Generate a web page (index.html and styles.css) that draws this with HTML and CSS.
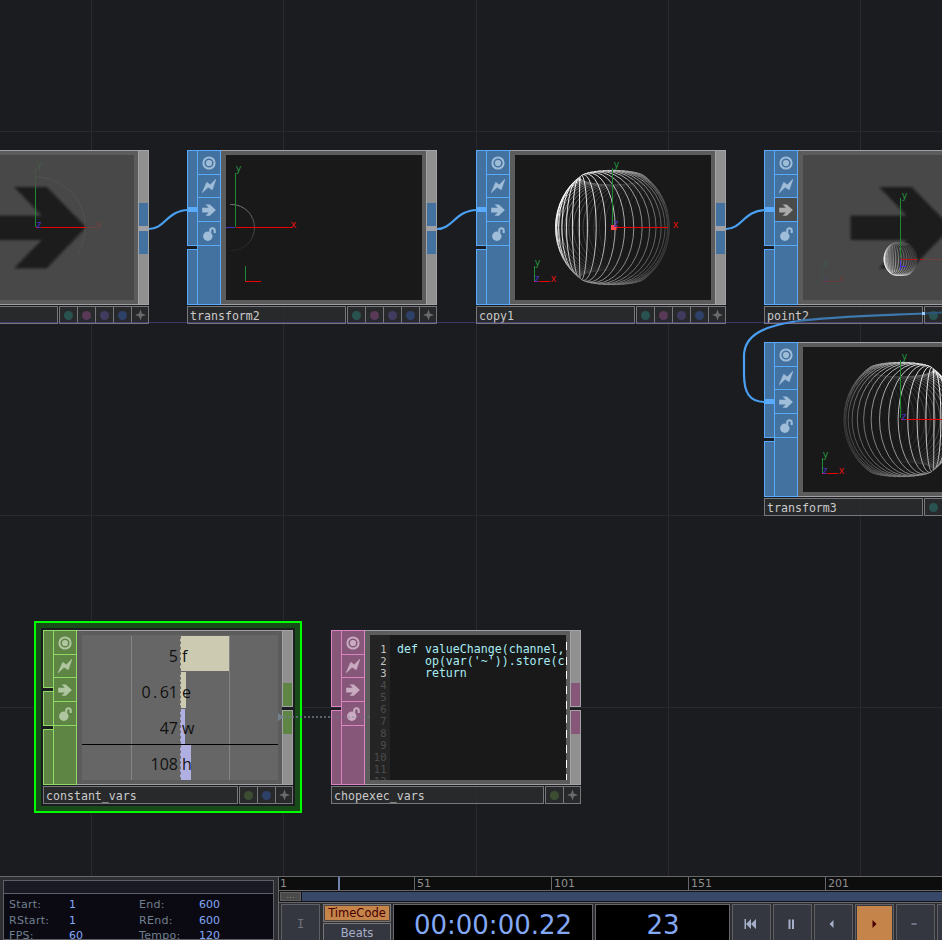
FILE: index.html
```html
<!DOCTYPE html>
<html lang="en">
<head>
<meta charset="utf-8">
<title>Network editor</title>
<link rel="stylesheet" href="styles.css">
</head>
<body>
<svg width="0" height="0" class="defs">
  <defs>
    <symbol id="i-ring" viewBox="0 0 14 14"><circle cx="7" cy="7" r="5.6" fill="none" stroke="currentColor" stroke-width="2"/><circle cx="7" cy="7" r="3.1" fill="currentColor"/></symbol>
    <symbol id="i-bolt" viewBox="0 0 14 14"><path d="M0 14 4.700 3.300 8.400 5.800 14 0 10.300 10.800 6.100 8.300Z" fill="currentColor" stroke="currentColor" stroke-width=".5"/></symbol>
    <symbol id="i-arrow" viewBox="0 0 14 14"><path d="M.2 4.800H6.800L3.500 1.400H7.800L13.900 7.100 7.800 12.800H3.500L6.800 9.400H.2Z" fill="currentColor"/></symbol>
    <symbol id="i-bomb" viewBox="0 0 14 14"><circle cx="5.800" cy="9.300" r="4.700" fill="currentColor"/><path d="M8.200 5.800V3.600C8.200 .6 12.700 .4 12.700 3.600V6" fill="none" stroke="currentColor" stroke-width="2.100"/></symbol>
    <symbol id="i-star" viewBox="0 0 12 12"><path d="M6 0 7.600 4.400 12 6 7.600 7.600 6 12 4.400 7.600 0 6 4.400 4.400Z" fill="#6a6a6a"/></symbol>
    <symbol id="corner" viewBox="0 0 196 145"><path class="axis" d="M19.5 111V126" stroke="#1e8a38"/><path class="axis" d="M19 126.5H35" stroke="#f00000"/></symbol>
    <linearGradient id="fade" x1="0" y1="0" x2="0" y2="1"><stop offset="0" stop-color="#777"/><stop offset="1" stop-color="#242424"/></linearGradient>
    <filter id="soft"><feGaussianBlur stdDeviation=".8"/></filter>
    <path id="bigarrow" d="M76.3 32H108.7L148 72.3 108.7 113.3H76.3L103.7 85H47.7V60.7H103.7Z" fill="#1c1c1c" filter="url(#soft)"/>
  </defs>
</svg>

<main class="network">
  <section class="node sop" style="left:-101px;top:150px">
    <div class="face">
      <div class="inputs"><i class="first"></i><i></i></div>
      <div class="tools"><span></span><span></span><span></span><span></span><span></span></div>
      <div class="body"><svg class="view light" viewBox="0 0 196 145">
        <use href="#bigarrow"/>
        <path d="M97.5 22A50 50 0 0 1 140 98" fill="none" stroke="#525252"/>
        <path class="axis" d="M97.5 13V60" stroke="#465546"/><path class="axis" d="M97.5 32V72" stroke="#1e8a38"/>
        <path class="axis" d="M98 72.5H148" stroke="#f00000"/><path class="axis" d="M148 72.5H159" stroke="#6a4242"/>
        <text x="98.500" y="13" fill="#465c48">y</text><text x="157.500" y="73" fill="#6e4242">x</text><text class="z" x="98" y="73">z</text>
      </svg></div>
      <div class="outputs"><i><b></b><em></em><b></b></i></div>
    </div>
    <div class="foot"><div class="name"></div><div class="flags"><i class="teal"></i><i class="plum"></i><i class="violet"></i><i class="blue"></i><i class="star"><svg><use href="#i-star"/></svg></i></div></div>
  </section>

  <section class="node sop" style="left:187px;top:150px">
    <div class="face">
      <div class="inputs"><i class="first"><u></u></i><i></i></div>
      <div class="tools"><span><svg><use href="#i-ring"/></svg></span><span><svg><use href="#i-bolt"/></svg></span><span><svg><use href="#i-arrow"/></svg></span><span><svg><use href="#i-bomb"/></svg></span><span></span></div>
      <div class="body"><svg class="view" viewBox="0 0 196 145">
        <path d="M4 49.500H5.500A23 23 0 0 1 5.500 95.500H4" fill="none" stroke="url(#fade)"/>
        <path class="axis" d="M9.500 18V72" stroke="#1e8a38"/><path class="axis" d="M0 72.500H9" stroke="#4433bb"/><path class="axis" d="M10 72.500H66" stroke="#f00000"/>
        <text class="y" x="9.500" y="17">y</text><text class="x" x="64.500" y="73">x</text>
        <use href="#corner"/>
      </svg></div>
      <div class="outputs"><i><b></b><em></em><b></b></i></div>
    </div>
    <div class="foot"><div class="name">transform2</div><div class="flags"><i class="teal"></i><i class="plum"></i><i class="violet"></i><i class="blue"></i><i class="star"><svg><use href="#i-star"/></svg></i></div></div>
  </section>

  <section class="node sop" style="left:476px;top:150px">
    <div class="face">
      <div class="inputs"><i class="first"><u></u></i><i></i></div>
      <div class="tools"><span><svg><use href="#i-ring"/></svg></span><span><svg><use href="#i-bolt"/></svg></span><span><svg><use href="#i-arrow"/></svg></span><span><svg><use href="#i-bomb"/></svg></span><span></span></div>
      <div class="body"><svg class="view" viewBox="0 0 196 145">
        <g data-sphere="left" data-cx="97.5" data-cy="72.500" data-scale="1"></g>
        <path class="axis" d="M97.500 13V71" stroke="#1e8a38"/><path class="axis" d="M98 72.500H153" stroke="#f00000"/>
        <rect x="96" y="70" width="5.500" height="5" fill="#ff4848"/>
        <text class="y" x="98.500" y="13">y</text><text class="x" x="157.500" y="73">x</text><text class="z" x="98" y="72">z</text>
        <use href="#corner"/><text class="y" x="19.500" y="111">y</text><text class="x" x="35.500" y="127">x</text><text class="z" x="19" y="127">z</text>
      </svg></div>
      <div class="outputs"><i><b></b><em></em><b></b></i></div>
    </div>
    <div class="foot"><div class="name">copy1</div><div class="flags"><i class="teal"></i><i class="plum"></i><i class="violet"></i><i class="blue"></i><i class="star"><svg><use href="#i-star"/></svg></i></div></div>
  </section>

  <section class="node sop" style="left:764px;top:150px">
    <div class="face">
      <div class="inputs"><i class="first"><u></u></i><i></i></div>
      <div class="tools"><span><svg><use href="#i-ring"/></svg></span><span><svg><use href="#i-bolt"/></svg></span><span class="off"><svg><use href="#i-arrow"/></svg></span><span><svg><use href="#i-bomb"/></svg></span><span></span></div>
      <div class="body"><svg class="view light" viewBox="0 0 196 145">
        <use href="#bigarrow"/>
        <circle cx="97.500" cy="104" r="16.500" fill="#3c3c3c"/>
        <g data-sphere="small" data-cx="97.500" data-cy="104" data-scale=".29"></g>
        <path class="axis" d="M97.500 43V102" stroke="#1e8a38"/><path class="axis" d="M97.500 105V115" stroke="#4a38e0"/><path class="axis" d="M98 111.500H103" stroke="#4a38e0"/>
        <path class="axis" d="M98 104.500H115M117 104.500H121" stroke="#b01818"/><path class="axis" d="M121 104.500H196" stroke="#6a4242"/>
        <text class="y" x="98.500" y="44">y</text>
        <use href="#corner" opacity=".18"/><g opacity=".22"><text class="y" x="19.500" y="111">y</text><text class="x" x="35.500" y="127">x</text><text class="z" x="19" y="127">z</text></g>
      </svg></div>
      <div class="outputs"><i><b></b><em></em><b></b></i></div>
    </div>
    <div class="foot"><div class="name">point2</div><div class="flags"><i class="teal"></i><i class="plum"></i><i class="violet"></i><i class="blue"></i><i class="star"></i></div></div>
  </section>

  <section class="node sop" style="left:764px;top:342px">
    <div class="face">
      <div class="inputs"><i class="first"><u></u></i><i></i></div>
      <div class="tools"><span><svg><use href="#i-ring"/></svg></span><span><svg><use href="#i-bolt"/></svg></span><span><svg><use href="#i-arrow"/></svg></span><span><svg><use href="#i-bomb"/></svg></span><span></span></div>
      <div class="body"><svg class="view" viewBox="0 0 196 145">
        <g data-sphere="right" data-cx="97.8" data-cy="72.500" data-scale="1"></g>
        <path class="axis" d="M97.500 13V71" stroke="#1e8a38"/><path class="axis" d="M98 72.500H153" stroke="#f00000"/>
        <text class="y" x="98.500" y="13">y</text><text class="z" x="98" y="73">z</text>
        <use href="#corner"/><text class="y" x="19.500" y="111">y</text><text class="x" x="35.500" y="127">x</text><text class="z" x="19" y="127">z</text>
      </svg></div>
      <div class="outputs"><i><b></b><em></em><b></b></i></div>
    </div>
    <div class="foot"><div class="name">transform3</div><div class="flags"><i class="teal"></i><i class="plum"></i><i class="violet"></i><i class="blue"></i><i class="star"></i></div></div>
  </section>

  <div class="selection"></div>
  <section class="node chop" style="left:43px;top:630px">
    <div class="face">
      <div class="inputs"><i class="first"></i><i class="second"></i><i></i></div>
      <div class="tools"><span><svg><use href="#i-ring"/></svg></span><span><svg><use href="#i-bolt"/></svg></span><span><svg><use href="#i-arrow"/></svg></span><span><svg><use href="#i-bomb"/></svg></span><span></span></div>
      <div class="body"><div class="channels">
        <div class="chan"><span>5</span><b class="cream" style="width:49px">f</b></div>
        <div class="chan"><span>0<i>.</i>61</span><b class="cream" style="width:6px">e</b></div>
        <div class="chan ruled"><span>47</span><b class="lilac" style="width:5px">w</b></div>
        <div class="chan"><span>108</span><b class="lilac" style="width:11px">h</b></div>
      </div></div>
      <div class="outputs split"><i><b></b></i><i><b></b></i></div>
    </div>
    <div class="foot"><div class="name">constant_vars</div><div class="flags"><i class="olive"></i><i class="blue"></i><i class="star"><svg><use href="#i-star"/></svg></i></div></div>
  </section>

  <section class="node dat" style="left:331px;top:630px">
    <div class="face">
      <div class="inputs"><i class="first"></i><i></i></div>
      <div class="tools"><span><svg><use href="#i-ring"/></svg></span><span><svg><use href="#i-bolt"/></svg></span><span><svg><use href="#i-arrow"/></svg></span><span><svg><use href="#i-bomb"/></svg></span><span></span></div>
      <div class="body"><div class="code">
        <pre class="gutter"><b>1
2
3</b>
4
5
6
7
8
9
10
11
12</pre>
        <pre class="source">def valueChange(channel,
    op(var('~')).store(ch
    return</pre>
      </div></div>
      <div class="outputs split"><i><b></b></i><i><b></b></i></div>
    </div>
    <div class="foot"><div class="name">chopexec_vars</div><div class="flags"><i class="olive"></i><i class="star"><svg><use href="#i-star"/></svg></i></div></div>
  </section>

  <svg class="wires" viewBox="0 0 942 876">
    <g fill="none" stroke="#4a9ff0" stroke-width="2.200">
      <path d="M149 229C165 229 167 210.500 188 210"/>
      <path d="M437 229C453 229 455 210.500 477 210"/>
      <path d="M726 229C742 229 744 210.500 765 210"/>
      <path d="M795 321.500C766 326 744 334 744 356V374C744 392 749 402 765 402"/>
      <path d="M795 321.500C830 316.500 880 315.500 924 313.500" stroke="#3d78ae"/>
      <path d="M924 313.500L942 312.500" stroke="#2e5679"/>
    </g>
    <rect x="922" y="312" width="3" height="3" fill="#9bcbff"/>
    <path d="M284 717H331" stroke="#6c7c8a" stroke-width="1.600" stroke-dasharray="2 2"/>
    <path d="M332 717H371" stroke="#6c7c8a" stroke-opacity=".45" stroke-width="1.600" stroke-dasharray="2 2"/>
    <path d="M278 713L284 717 278 721Z" fill="#71808b"/>
  </svg>
</main>

<footer class="bar">
  <div class="info">
    <div class="info-head"></div>
    <dl>
      <dt>Start:</dt><dd>1</dd><dt>End:</dt><dd>600</dd>
      <dt>RStart:</dt><dd>1</dd><dt>REnd:</dt><dd>600</dd>
      <dt>FPS:</dt><dd>60</dd><dt>Tempo:</dt><dd>120</dd>
    </dl>
  </div>
  <div class="timeline">
    <div class="ruler"><span class="t0">1</span><span>51</span><span>101</span><span>151</span><span>201</span><i class="playhead"></i></div>
    <div class="range"><span>...</span><i></i></div>
    <div class="controls">
      <div class="btn lock">I</div>
      <div class="modes"><div class="on">TimeCode</div><div>Beats</div></div>
      <div class="lcd">00:00:00.22</div>
      <div class="lcd frame">23</div>
      <div class="btn"><svg viewBox="0 0 12 10"><path d="M.5 0H2V10H.5ZM7 0V10L2 5ZM12 0V10L7 5Z"/></svg></div>
      <div class="btn"><svg viewBox="0 0 12 10"><path d="M3.500 .5H5.500V10H3.500ZM7 .5H9V10H7Z"/></svg></div>
      <div class="btn"><svg viewBox="0 0 12 10"><path d="M7.500 1V9L3.500 5Z"/></svg></div>
      <div class="btn play"><svg viewBox="0 0 12 10"><path d="M4.500 1V9L8.500 5Z"/></svg></div>
      <div class="btn"><svg viewBox="0 0 12 10"><path d="M3.500 4.500H8.500V5.500H3.500Z"/></svg></div>
      <div class="btn"></div>
    </div>
  </div>
</footer>
<script src="script.js"></script>
</body>
</html>
```
FILE: styles.css
```css
* { box-sizing: border-box; }
html, body { margin: 0; height: 100%; overflow: hidden; }
body { width: 942px; height: 940px; display: flex; flex-direction: column; background: #1b1c20; font-family: "DejaVu Sans", sans-serif; }
.defs { position: absolute; }
i, em, u { font-style: normal; text-decoration: none; }

.network { position: relative; flex: 1; overflow: hidden; background: #1b1c20; }
.network::before, .network::after { content: ""; position: absolute; inset: 0; pointer-events: none; }
.network::before {
  background:
    linear-gradient(#29292f, #29292f) 91px 0 / 1px 100% no-repeat, linear-gradient(#29292f, #29292f) 283px 0 / 1px 100% no-repeat,
    linear-gradient(#29292f, #29292f) 476px 0 / 1px 100% no-repeat, linear-gradient(#29292f, #29292f) 668px 0 / 1px 100% no-repeat,
    linear-gradient(#29292f, #29292f) 860px 0 / 1px 100% no-repeat, linear-gradient(#29292f, #29292f) 0 131px / 100% 1px no-repeat,
    linear-gradient(#29292f, #29292f) 0 515px / 100% 1px no-repeat, linear-gradient(#29292f, #29292f) 0 707px / 100% 1px no-repeat;
}
.network::after { background: linear-gradient(rgba(94, 84, 180, .5), rgba(94, 84, 180, .5)) 0 322px / 100% 1px no-repeat; }
.wires { position: absolute; left: 0; top: 0; width: 942px; height: 876px; }
.selection { position: absolute; left: 34px; top: 621px; width: 268px; height: 192px; border: 2px solid #00ff00; background: #1b1c1f; box-shadow: inset 0 0 0 5px #174b17; }

.node { position: absolute; width: 250px; }
.sop { --fill: #4472a0; --line: #59abff; --icon: #9fbcd8; --h1: 96px; }
.chop { --fill: #5f8545; --line: #8fd964; --icon: #b0c6a0; --h1: 58px; }
.dat { --fill: #87577a; --line: #dc83c4; --icon: #c9acc1; --h1: 77px; }
.face { display: grid; grid-template-columns: 10px 24px 205px 11px; height: 155px; }
.inputs { display: flex; flex-direction: column; gap: 3px; }
.inputs i { flex: 1; background: var(--fill); border: 1px solid var(--line); border-right: 0; }
.inputs .first { flex: none; height: var(--h1); padding-top: 56px; }
.inputs .second { flex: none; height: 35px; }
.inputs u { display: block; height: 5px; background: var(--line); }
.tools { display: grid; grid-template-rows: 24px 23px 24px 24px 1fr; background: var(--fill); border: 1px solid var(--line); color: var(--icon); }
.tools span { display: flex; align-items: center; justify-content: center; border-bottom: 1px solid var(--line); }
.tools span:last-child { border-bottom: 0; }
.tools svg { width: 14px; height: 14px; }
.tools .off { background: #4b4b4b; color: #aaa; }
.body { background: #5c5c5c; border: 1px solid #a0a0a2; border-width: 1px 0; padding: 4px 4px 4px 5px; }
.view { display: block; width: 196px; height: 145px; background: #191919; }
.view.light { background: #484848; }
.view text { font: 10px "DejaVu Sans Mono", monospace; }
.view .x { fill: #e81010; } .view .y { fill: #229040; } .view .z { fill: #4633c0; }
.axis { shape-rendering: crispEdges; stroke-width: 1; }
.outputs { display: flex; flex-direction: column; gap: 3px; }
.outputs i { flex: 1; background: #909090; border: 1px solid #a3a3a6; padding-top: 52px; }
.outputs b { display: block; height: 23px; background: var(--fill); }
.outputs em { display: block; height: 5px; background: #a0a0a5; }
.outputs.split i { padding-top: 0; }
.outputs.split i:first-child { flex: none; height: 77px; padding-top: 52px; }
.foot { display: flex; gap: 1px; height: 18px; margin-top: 1px; }
.name { flex: 1; border: 1px solid #77777b; background: rgba(42, 43, 45, .85); color: #cacaca; font: 11.6px/18px "DejaVu Sans Mono", monospace; padding-left: 2px; }
.flags { display: flex; border-right: 1px solid #77777b; }
.flags i { width: 18px; border: 1px solid #77777b; border-right: 0; background: rgba(42, 43, 45, .85); display: flex; align-items: center; justify-content: center; }
.flags i:last-child { width: 17px; }
.flags i::before { content: ""; width: 9px; height: 9px; border-radius: 50%; background: var(--dot); }
.flags .star::before { display: none; }
.flags svg { width: 11px; height: 12px; }
.teal { --dot: #295350; } .plum { --dot: #593958; } .violet { --dot: #423b60; } .blue { --dot: #2e4168; } .olive { --dot: #3d4d32; }

.channels { height: 145px; padding-top: 1px; display: grid; grid-template-rows: 36px 37px 36px 35px; background:
  linear-gradient(#858585, #858585) 49px 1px / 1px 144px no-repeat,
  linear-gradient(#858585, #858585) 147px 1px / 1px 144px no-repeat, #666; font: 16px/36px "Open Sans", sans-serif; color: #111; }
.chan { display: grid; grid-template-columns: 98px 1fr; grid-template-rows: 100%; }
.chan span { text-align: right; padding-right: 2px; line-height: 40px; height: 35px; }
.chan span i { display: inline-block; width: 9px; text-align: center; }
.chan b { font-weight: 400; line-height: 40px; margin-bottom: 1px; padding-left: 1px; border-left: 1px dashed #707070; }
.chan:last-child b { margin-bottom: 0; }
.chan.ruled { box-shadow: inset 0 -1px #000; }
.chan.ruled span, .chan:last-child span, .chan.ruled b, .chan:last-child b { line-height: 39px; }
.cream { background: #cccbb2; } .lilac { background: #b0afe2; }

.code { height: 145px; margin-right: -1px; overflow: hidden; display: flex; background:
  repeating-linear-gradient(#fff 0 8px, #5c5c5c 8px 14.700px) 196px 7px / 1px 138px no-repeat,
  linear-gradient(#5c5c5c, #5c5c5c) 196px 0 / 1px 7px no-repeat, #191919; }
.code pre { margin: 0; padding-top: 8px; font: 11.600px/12px "DejaVu Sans Mono", monospace; }
.gutter { flex: none; width: 20px; margin-left: 1px; padding-right: 3.500px; background: #242424; color: #4c4c4c; text-align: right; font-size: 10.500px !important; }
.gutter b { font-weight: 400; color: #c4c4c4; }
.source { width: 174px; color: #a9edf5; overflow: hidden; }
.code .source { margin-left: 1px; padding-left: 6px; }

.bar { flex: none; height: 64px; display: flex; background: #2d2e32; border-top: 1px solid #66666b; }
.info { flex: none; width: 271px; margin: 3px 4px 0 3px; border: 1px solid #5e5e66; background: #0b0a13; }
.info-head { height: 13px; background: #1a1a24; border-bottom: 1px solid #5e5e66; }
.info dl { margin: 0; padding: 3px 0 0 5px; display: grid; grid-template-columns: 60px 70px 60px 60px; grid-auto-rows: 15.500px; font-size: 11px; line-height: 16px; }
.info dt { color: #70808e; letter-spacing: .3px; }
.info dd { margin: 0; color: #83a8f6; }
.timeline { flex: 1; min-width: 0; overflow: hidden; border-left: 1px solid #66666b; }
.ruler { position: relative; display: grid; grid-template-columns: 135px 137px 137px 137px 137px; height: 14px; background: #0d0d0d; border-bottom: 1px solid #66666b; }
.ruler span { border-left: 1px solid #66666b; padding-left: 2px; font-size: 11px; line-height: 13px; color: #8f8f8f; }
.ruler .t0 { border: 0; padding-left: 1px; }
.playhead { position: absolute; left: 59px; top: 0; width: 2px; height: 13px; background: #6f82ae; }
.range { height: 12px; display: flex; gap: 1px; padding: 1px 0 1px 1px; background: #141416; border-bottom: 1px solid #66666b; }
.range span { width: 21px; height: 9px; background: #4a4a4a; border: 1px solid #606060; color: #888; font-size: 9px; line-height: 4px; text-align: center; }
.range i { flex: 1; background: #374869; }
.controls { display: flex; gap: 2px; margin: 1px 0 0 2px; height: 60px; width: 760px; }
.btn { flex: none; width: 39px; height: 40px; background: #353740; border: 1px solid #606064; display: flex; align-items: center; justify-content: center; padding-right: 3px; color: #6e727c; }
.btn svg { width: 12px; height: 10px; fill: #a5b0c8; }
.lock { padding-right: 0; font: 12px "DejaVu Sans Mono", monospace; }
.play { background: #c4844a; box-shadow: inset 0 0 0 1px #353740; padding-right: 1px; }
.play svg { fill: #480000; }
.modes { width: 68px; margin-left: 1px; display: grid; grid-template-rows: 18px 21px; gap: 1px; font-size: 11.500px; line-height: 17px; text-align: center; color: #a5b0c8; }
.modes div { background: #353740; border: 1px solid #77777b; }
.modes div:last-child { line-height: 19px; }
.modes .on { background: #c4844a; color: #480000; box-shadow: inset 0 0 0 1px #51433a; }
.lcd { width: 200px; height: 40px; background: #000; border: 1px solid #66666b; color: #83a8f6; font-size: 26px; line-height: 40px; text-align: center; }
.lcd.frame { width: 135px; padding-left: 1px; }
```
FILE: script.js
```js
// Wire surfaces: an arc offset from the vertical axis, copied around it.
const NS = 'http://www.w3.org/2000/svg';
const COPIES = 48, STEPS = 20, ARC_X = 45, ARC_Y = 49, OFFSET = 32, CAMERA = 222;

function point(theta, phi, mirror) {
  const x = ARC_X * Math.cos(phi), y = ARC_Y * Math.sin(phi), z = OFFSET;
  const wx = x * Math.cos(theta) - z * Math.sin(theta);
  const wz = x * Math.sin(theta) + z * Math.cos(theta);
  const k = CAMERA / (CAMERA - wz);
  return { x: mirror * wx * k, y: -y * k, nx: mirror * wx / 56, ny: y / 56, nz: wz / 56 };
}

document.querySelectorAll('[data-sphere]').forEach(g => {
  const kind = g.dataset.sphere;
  const mirror = kind === 'right' ? -1 : 1;
  const cx = +g.dataset.cx, cy = +g.dataset.cy, s = +g.dataset.scale;
  const light = kind === 'left' ? [-0.7, 0.3, 0.6] : kind === 'right' ? [0.7, 0.3, 0.6] : [-0.75, -0.45, 0.5];
  const segments = [];
  for (let i = 0; i < COPIES; i++) {
    const theta = i * 2 * Math.PI / COPIES;
    for (let j = 0; j < STEPS; j++) {
      const a = point(theta, (j / STEPS - 0.5) * Math.PI, mirror);
      const b = point(theta, ((j + 1) / STEPS - 0.5) * Math.PI, mirror);
      const dot = a.nx * light[0] + a.ny * light[1] + a.nz * light[2];
      const half = Math.max(0, 0.5 + 0.5 * dot);
      const v = Math.round(Math.min(255, 24 + 255 * Math.pow(half, 1.5) * (a.nz < 0 ? 0.55 : 1)));
      segments.push({ a, b, v, z: a.nz });
    }
  }
  segments.sort((p, q) => p.z - q.z);
  for (const { a, b, v } of segments) {
    const line = document.createElementNS(NS, 'path');
    line.setAttribute('d', `M${cx + a.x * s} ${cy + a.y * s}L${cx + b.x * s} ${cy + b.y * s}`);
    line.setAttribute('stroke', `rgb(${v},${v},${v})`);
    line.setAttribute('stroke-width', s < 1 ? 0.5 : 0.9);
    g.appendChild(line);
  }
});
```
